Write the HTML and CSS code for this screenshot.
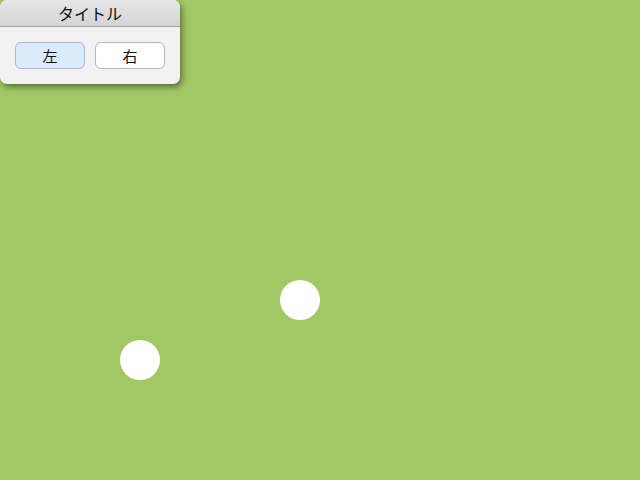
FILE: index.html
```html
<!DOCTYPE html>
<html lang="ja">
<head>
<meta charset="utf-8">
<link rel="stylesheet" href="styles.css">
</head>
<body>
<div class="stage">
  <div class="panel">
    <div class="title">タイトル</div>
    <div class="body">
      <button class="btn btn-active">左</button>
      <button class="btn">右</button>
    </div>
  </div>
  <div class="dot dot-a"></div>
  <div class="dot dot-b"></div>
</div>
</body>
</html>
```
FILE: styles.css
```css
html, body {
  margin: 0;
  padding: 0;
  width: 640px;
  height: 480px;
  overflow: hidden;
  background: #a2c866;
  font-family: "Noto Sans CJK JP", "Liberation Sans", sans-serif;
}
.stage {
  position: relative;
  width: 640px;
  height: 480px;
}
.panel {
  position: absolute;
  left: 0;
  top: 0;
  width: 180px;
  border-radius: 7px;
  background: #f2f2f2;
  box-shadow: 2px 3px 6px rgba(0, 0, 0, 0.45);
  overflow: hidden;
}
.title {
  height: 27px;
  box-sizing: border-box;
  border-bottom: 1px solid #a0a0a0;
  background: linear-gradient(#e6e6e6, #d4d4d4);
  text-align: center;
  font-size: 16px;
  line-height: 27px;
  color: #111;
}
.body {
  display: flex;
  gap: 10px;
  padding: 15px 15px 15px 15px;
  height: 27px;
}
.btn {
  width: 70px;
  height: 27px;
  box-sizing: border-box;
  border: 1px solid #b5b5b5;
  border-radius: 6px;
  background: #ffffff;
  font-family: "Noto Sans CJK JP", sans-serif;
  font-size: 15px;
  color: #111;
  padding: 0;
  line-height: 25px;
}
.btn-active {
  background: #dcebfa;
  border-color: #a9b8c8;
}
.dot {
  position: absolute;
  width: 40px;
  height: 40px;
  border-radius: 50%;
  background: #fff;
}
.dot-a { left: 280px; top: 280px; }
.dot-b { left: 120px; top: 340px; }
```
